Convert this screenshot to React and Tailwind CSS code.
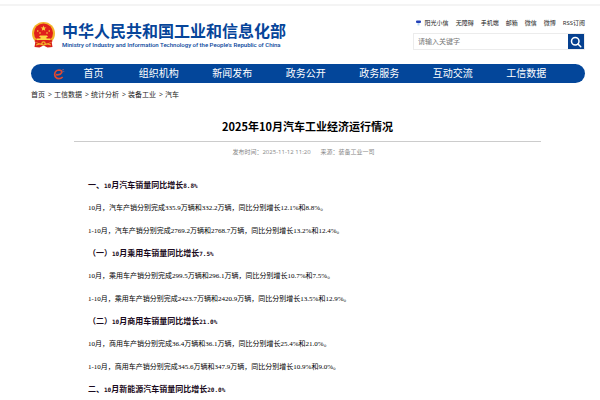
import React from "react";

const quickLinks = ["阳光小信", "无障碍", "手机端", "邮箱", "微信", "微博", "RSS订阅"];
const navItems = ["组织机构", "新闻发布", "政务公开", "政务服务", "互动交流", "工信数据"];
const crumbs = ["首页", "工信数据", "统计分析", "装备工业", "汽车"];

const sections = [
  {
    title: "一、10月汽车销量同比增长8.8%",
    lines: [
      "10月，汽车产销分别完成335.9万辆和332.2万辆，同比分别增长12.1%和8.8%。",
      "1-10月，汽车产销分别完成2769.2万辆和2768.7万辆，同比分别增长13.2%和12.4%。",
    ],
  },
  {
    title: "（一）10月乘用车销量同比增长7.5%",
    lines: [
      "10月，乘用车产销分别完成299.5万辆和296.1万辆，同比分别增长10.7%和7.5%。",
      "1-10月，乘用车产销分别完成2423.7万辆和2420.9万辆，同比分别增长13.5%和12.9%。",
    ],
  },
  {
    title: "（二）10月商用车销量同比增长21.0%",
    lines: [
      "10月，商用车产销分别完成36.4万辆和36.1万辆，同比分别增长25.4%和21.0%。",
      "1-10月，商用车产销分别完成345.6万辆和347.9万辆，同比分别增长10.9%和9.0%。",
    ],
  },
  { title: "二、10月新能源汽车销量同比增长20.0%", lines: [] },
];

// Headings set their figures in a monospaced face, half as wide as a Chinese character.
function HeadingText({ text }) {
  return text.split(/([0-9.%-]+)/).map((part, i) =>
    i % 2 === 1 ? (
      <span key={i} className="font-['DejaVu_Sans_Mono',monospace] text-[6px]">
        {part}
      </span>
    ) : (
      part
    )
  );
}

function Emblem() {
  return (
    <svg viewBox="0 0 50 52" className="h-[26px] w-[25px] shrink-0" aria-hidden="true">
      <path d="M9 38 L41 38 L43 50 L33 51 L25 47 L17 51 L7 50Z" fill="#d8201c" />
      <circle cx="25" cy="23" r="23" fill="#f3b52a" />
      <circle cx="25" cy="22" r="19" fill="#e0201b" />
      <path d="M25 7l1.5 3.9 4.2.2-3.3 2.6 1.1 4-3.5-2.2-3.5 2.2 1.1-4-3.3-2.6 4.2-.2z" fill="#fbd743" />
      <g fill="#fbd743">
        <circle cx="13.5" cy="18" r="1.6" />
        <circle cx="18" cy="22" r="1.6" />
        <circle cx="32" cy="22" r="1.6" />
        <circle cx="36.5" cy="18" r="1.6" />
        <path d="M18 27h14l2 3H16zM19 30h12v3H19zM11 33h28v3H11z" />
      </g>
      <path d="M8 37q17 9 34 0" fill="none" stroke="#d8201c" strokeWidth="4" />
      <circle cx="25" cy="43" r="4.5" fill="#f3b52a" />
      <circle cx="25" cy="43" r="2" fill="#e0201b" />
      <path d="M10 46l7-2M40 46l-7-2" stroke="#f3b52a" strokeWidth="2.5" />
    </svg>
  );
}

function PartyMark() {
  return (
    <svg viewBox="0 0 36 36" className="h-3 w-3 shrink-0" aria-hidden="true">
      <path
        d="M9 20 Q22 22 26 14 Q27 6 18 6 Q6 7 5 19 Q6 31 18 32 Q24 32 29 27"
        fill="none"
        stroke="#e0492f"
        strokeWidth="5"
      />
      <path d="M26 7q5-4 7-2M28 12q4-3 6-1" fill="none" stroke="#b9606c" strokeWidth="2" />
    </svg>
  );
}

function SearchBox() {
  return (
    <form className="flex h-[17px] w-[172px] items-center border border-[#ececec]" onSubmit={(e) => e.preventDefault()}>
      <input
        type="text"
        aria-label="搜索"
        placeholder="请输入关键字"
        className="h-full min-w-0 flex-1 bg-white px-1 text-[7px] outline-none placeholder:text-[#777]"
      />
      <button type="submit" aria-label="搜索" className="flex h-[15px] w-4 items-center justify-center bg-[#05408f]">
        <svg viewBox="0 0 24 24" className="h-3 w-3" fill="none" stroke="#fff" strokeWidth="3" strokeLinecap="round" aria-hidden="true">
          <circle cx="10.5" cy="10.5" r="7.5" />
          <path d="M16 16l5.5 5.5" />
        </svg>
      </button>
    </form>
  );
}

export default function App() {
  return (
    <div className="bg-white font-['Open_Sans','Noto_Sans_CJK_SC',sans-serif] text-[#222]">
      <div className="pt-1">
        <div className="h-[2px] bg-[#f4f4f4]" />
      </div>
      <div className="pr-[15px] pl-[31px]">
        <header className="flex items-start justify-between pt-[13px]">
          <div className="flex items-center gap-[6px] pt-[2px] text-[#06459a]">
            <Emblem />
            <div>
              <h1 className="text-[16px] leading-[20px] font-bold whitespace-nowrap">中华人民共和国工业和信息化部</h1>
              <p className="font-['Roboto',sans-serif] text-[6px] leading-[8px] font-medium whitespace-nowrap">
                Ministry of Industry and Information Technology of the People's Republic of China
              </p>
            </div>
          </div>
          <div className="flex flex-col items-end gap-[5px]">
            <ul className="flex items-center gap-[7px] text-[6px] leading-[9px] whitespace-nowrap">
              {quickLinks.map((label, i) => (
                <li key={label}>
                  <a href="#" className="flex items-center gap-1">
                    {i === 0 && (
                      <svg viewBox="0 0 10 14" className="h-[7px] w-[5px]" aria-hidden="true">
                        <rect x="0" y="1" width="10" height="5" rx="2" fill="#2340b8" />
                        <path d="M3 6h4v5H3z" fill="#b9d8ee" />
                      </svg>
                    )}
                    {label}
                  </a>
                </li>
              ))}
            </ul>
            <SearchBox />
          </div>
        </header>

        <nav className="mt-[14px] flex h-[19px] items-center rounded-full bg-[#03469a] px-[22px] text-[10px] leading-[19px] whitespace-nowrap text-white">
          <PartyMark />
          <a href="#" className="w-[57px] shrink-0 text-center">首页</a>
          {navItems.map((label) => (
            <a key={label} href="#" className="flex-1 text-center">{label}</a>
          ))}
        </nav>

        <ol className="mt-[7px] flex gap-[3px] text-[7px] leading-[10px]">
          {crumbs.map((label, i) => (
            <li key={label} className="flex gap-[3px]">
              {i > 0 && <span className="w-[3px]">&gt;</span>}
              <a href="#">{label}</a>
            </li>
          ))}
        </ol>

        <article className="pr-[44px] pl-[43px]">
          <h2 className="mt-[18px] border-b border-[#ccc] pb-[7px] text-center font-['Noto_Sans_CJK_SC',sans-serif] text-[11px] leading-[16px] font-bold text-black">
            2025年10月汽车工业经济运行情况
          </h2>
          <p className="mt-[5px] flex justify-center gap-[10px] pr-2 text-[6px] leading-[10px] text-[#888]">
            <span>发布时间：2025-11-12 11:20</span>
            <span>来源：装备工业一司</span>
          </p>
          <div className="mt-[18px] px-[14px] font-['Liberation_Serif','Noto_Sans_CJK_SC',sans-serif] text-black">
            {sections.map((section) => (
              <section key={section.title}>
                <h3 className="h-[22px] text-[8px] leading-[22px] font-bold text-[#1a0a20]">
                  <HeadingText text={section.title} />
                </h3>
                {section.lines.map((line) => (
                  <p key={line} className="h-[23px] text-[7px] leading-[22px]">
                    {line}
                  </p>
                ))}
              </section>
            ))}
          </div>
        </article>
      </div>
    </div>
  );
}
